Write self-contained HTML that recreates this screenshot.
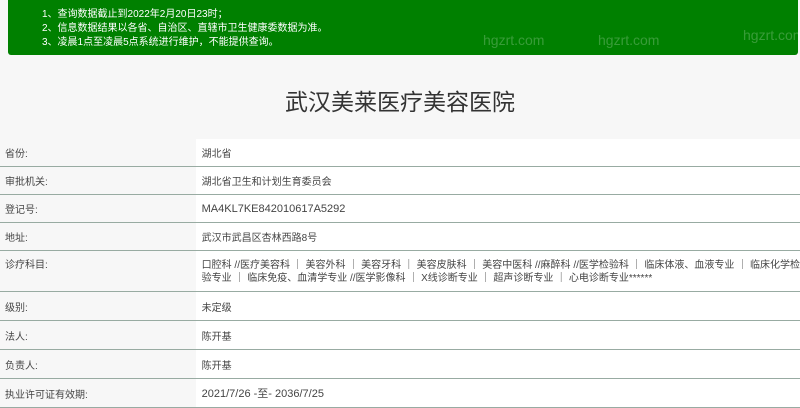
<!DOCTYPE html>
<html><head><meta charset="utf-8"><style>
body{margin:0;width:800px;height:402px;overflow:hidden;background:#f7f7f7;font-family:"Liberation Sans","Noto Sans CJK SC",sans-serif;}
.ban{position:absolute;left:8px;top:0;width:790px;height:55px;background:#008000;color:#fff;font-size:10px;line-height:14px;border-radius:0 0 3px 3px;}
.ban div{position:absolute;left:34px;}
.wm{position:absolute;color:rgba(255,255,255,0.22);font-size:14px;}
h1{position:absolute;left:0;width:800px;top:83px;margin:0;text-align:center;font-weight:normal;font-size:23px;color:#333;}
table{position:absolute;left:0;top:139px;width:800px;border-collapse:collapse;font-size:10px;color:#444;}
td{border-bottom:1px solid #98aba2;height:28px;padding:0 0 0 5px;vertical-align:middle;}
tr.s td{height:27px;}
td.l{width:195px;background:#f7f7f7;}
td.r{background:#fff;padding-left:6px;}
.tall td{height:41px;line-height:13px;vertical-align:top;padding-top:8px;box-sizing:border-box;}
</style></head><body>
<div class="ban">
<div style="top:8px">1、查询数据截止到2022年2月20日23时；</div>
<div style="top:22px">2、信息数据结果以各省、自治区、直辖市卫生健康委数据为准。</div>
<div style="top:36px">3、凌晨1点至凌晨5点系统进行维护，不能提供查询。</div>
<span class="wm" style="left:475px;top:33px">hgzrt.com</span>
<span class="wm" style="left:590px;top:33px">hgzrt.com</span>
<span class="wm" style="left:735px;top:28px">hgzrt.com</span>
</div>
<h1>武汉美莱医疗美容医院</h1>
<table>
<tr class="s"><td class="l">省份:</td><td class="r">湖北省</td></tr>
<tr class="s"><td class="l">审批机关:</td><td class="r">湖北省卫生和计划生育委员会</td></tr>
<tr class="s"><td class="l">登记号:</td><td class="r" style="font-size:11px">MA4KL7KE842010617A5292</td></tr>
<tr class="s"><td class="l">地址:</td><td class="r">武汉市武昌区杏林西路8号</td></tr>
<tr class="tall"><td class="l">诊疗科目:</td><td class="r" style="white-space:nowrap;overflow:hidden">口腔科 //医疗美容科 ｜ 美容外科 ｜ 美容牙科 ｜ 美容皮肤科 ｜ 美容中医科 //麻醉科 //医学检验科 ｜ 临床体液、血液专业 ｜ 临床化学检<br>验专业 ｜ 临床免疫、血清学专业 //医学影像科 ｜ X线诊断专业 ｜ 超声诊断专业 ｜ 心电诊断专业******</td></tr>
<tr><td class="l">级别:</td><td class="r">未定级</td></tr>
<tr><td class="l">法人:</td><td class="r">陈开基</td></tr>
<tr><td class="l">负责人:</td><td class="r">陈开基</td></tr>
<tr><td class="l">执业许可证有效期:</td><td class="r" style="font-size:11px">2021/7/26 -至- 2036/7/25</td></tr>
</table>
</body></html>
